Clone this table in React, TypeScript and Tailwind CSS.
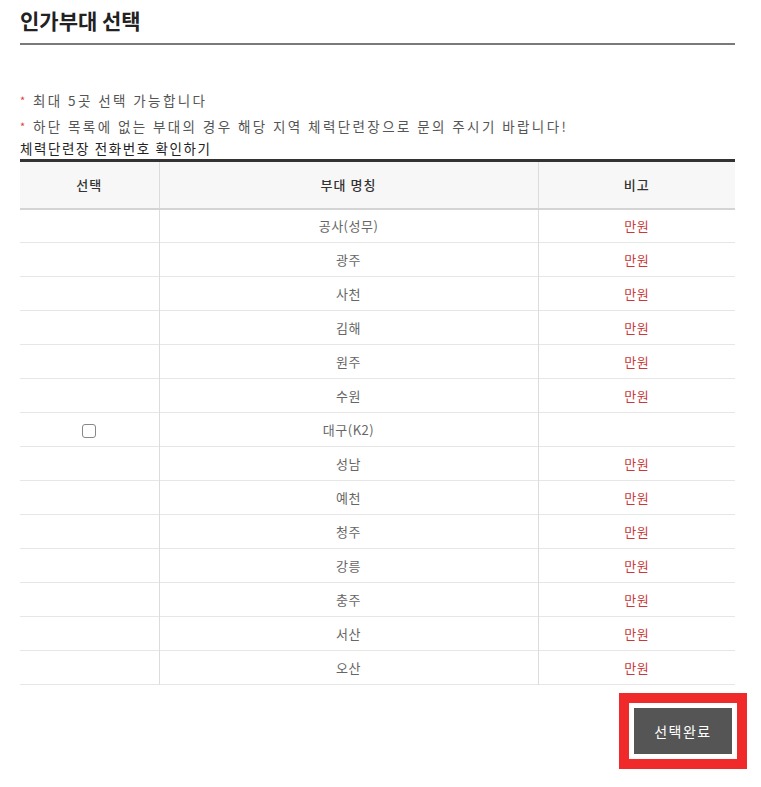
import React from "react";

const rows = [
  { name: "공사(성무)", note: "만원", check: false },
  { name: "광주", note: "만원", check: false },
  { name: "사천", note: "만원", check: false },
  { name: "김해", note: "만원", check: false },
  { name: "원주", note: "만원", check: false },
  { name: "수원", note: "만원", check: false },
  { name: "대구(K2)", note: "", check: true },
  { name: "성남", note: "만원", check: false },
  { name: "예천", note: "만원", check: false },
  { name: "청주", note: "만원", check: false },
  { name: "강릉", note: "만원", check: false },
  { name: "충주", note: "만원", check: false },
  { name: "서산", note: "만원", check: false },
  { name: "오산", note: "만원", check: false },
];

export default function App() {
  return (
    <div
      className="w-[761px] h-[787px] bg-white pl-[20px] pr-[26px] pt-[6px]"
      style={{ fontFamily: '"Noto Sans CJK KR", "Noto Sans", sans-serif' }}
    >
      {/* Title */}
      <h1 className="text-[21px] font-bold text-[#222] leading-[28px] pb-[9px] border-b-2 border-[#7a7a7a]">
        인가부대 선택
      </h1>

      {/* Notices */}
      <div className="mt-[42px] text-[13.5px] text-[#555] leading-[26px] tracking-[2.4px]">
        <p>
          <span className="text-[#e04040] text-[11px] align-[1px]">*</span> 최대 5곳 선택 가능합니다
        </p>
        <p>
          <span className="text-[#e04040] text-[11px] align-[1px]">*</span> 하단 목록에 없는 부대의 경우 해당 지역 체력단련장으로 문의 주시기 바랍니다!
        </p>
      </div>
      <p className="text-[13.5px] text-[#222] leading-[18px] tracking-[1.6px]">체력단련장 전화번호 확인하기</p>

      {/* Table */}
      <table className="w-full mt-[2px] border-t-[3px] border-[#333] border-collapse text-[13px]">
        <thead>
          <tr className="bg-[#f7f7f7] h-[48px] border-b-2 border-[#d4d4d4]">
            <th className="w-[139px] font-medium text-[#333] border-r border-[#dcdcdc] tracking-[1px]">선택</th>
            <th className="w-[379px] font-medium text-[#333] border-r border-[#dcdcdc] tracking-[1px]">부대 명칭</th>
            <th className="font-medium text-[#333] tracking-[1px]">비고</th>
          </tr>
        </thead>
        <tbody>
          {rows.map((r) => (
            <tr key={r.name} className="h-[34px] border-b border-[#e6e6e6]">
              <td className="text-center border-r border-[#dcdcdc]">
                {r.check && (
                  <span className="inline-block w-[14px] h-[14px] border border-[#888] rounded-[3px] align-middle bg-white" />
                )}
              </td>
              <td className="text-center text-[#666] border-r border-[#dcdcdc] tracking-[0.5px]">{r.name}</td>
              <td className="text-center text-[#c83a3a] tracking-[0.5px]">{r.note}</td>
            </tr>
          ))}
        </tbody>
      </table>

      {/* Submit */}
      <div className="flex justify-end -mr-[12px] mt-[8px]">
        <div className="border-[10px] border-[#f02a2a] p-[5px]">
          <button className="w-[98px] h-[46px] bg-[#555] text-white text-[14px] tracking-[1.5px]">선택완료</button>
        </div>
      </div>
    </div>
  );
}
